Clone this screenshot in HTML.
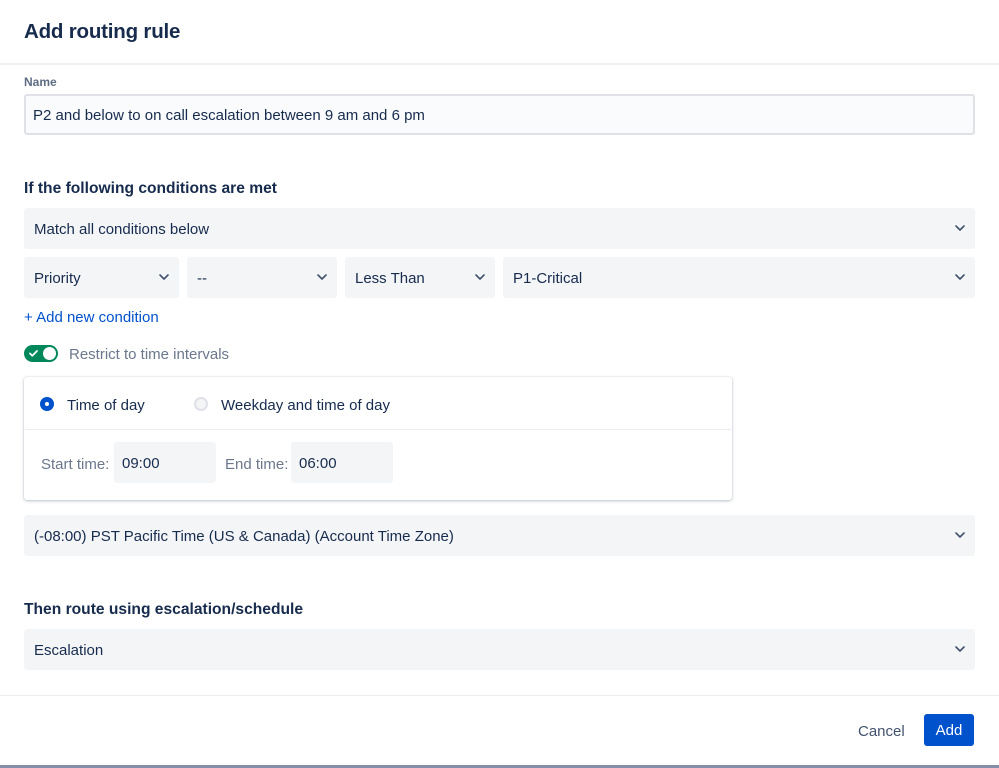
<!DOCTYPE html>
<html><head><meta charset="utf-8"><style>
*{box-sizing:border-box;margin:0;padding:0}
body{width:999px;height:768px;overflow:hidden;background:#fff;font-family:"Liberation Sans",sans-serif;color:#172b4d;position:relative}
.a{position:absolute}
.sel{position:absolute;background:#f4f5f7;border-radius:3px;height:41px;font-size:15px;line-height:43px;padding-left:10px;color:#172b4d}
.chev{position:absolute;right:9px;top:14px;width:12px;height:12px}
h3{position:absolute;font-size:15.6px;font-weight:bold;color:#172b4d}
</style></head><body>
<div class="a" style="left:24px;top:20px;font-size:20.5px;font-weight:bold;letter-spacing:-0.2px">Add routing rule</div>
<div class="a" style="left:0;top:63px;width:999px;height:2px;background:#f1f2f4"></div>
<div class="a" style="left:24px;top:75px;font-size:12px;font-weight:bold;color:#5e6c84">Name</div>
<div class="a" style="left:24px;top:94px;width:951px;height:41px;border:2px solid #dfe1e6;border-radius:3px;background:#fafbfc;font-size:15px;line-height:40px;padding-left:7px">P2 and below to on call escalation between 9 am and 6 pm</div>
<h3 style="left:24px;top:180px">If the following conditions are met</h3>
<svg width="0" height="0" style="position:absolute"><defs><symbol id="c" viewBox="0 0 12 12"><path d="M2 4l4 4 4-4" fill="none" stroke="#42526e" stroke-width="1.6" stroke-linecap="round" stroke-linejoin="round"/></symbol></defs></svg>
<div class="sel" style="left:24px;top:208px;width:951px">Match all conditions below<svg class="chev"><use href="#c"/></svg></div>
<div class="sel" style="left:24px;top:257px;width:155px">Priority<svg class="chev"><use href="#c"/></svg></div>
<div class="sel" style="left:187px;top:257px;width:150px">--<svg class="chev"><use href="#c"/></svg></div>
<div class="sel" style="left:345px;top:257px;width:150px">Less Than<svg class="chev"><use href="#c"/></svg></div>
<div class="sel" style="left:503px;top:257px;width:472px">P1-Critical<svg class="chev"><use href="#c"/></svg></div>
<div class="a" style="left:24px;top:309px;font-size:15px;color:#0052cc">+ Add new condition</div>
<div class="a" style="left:24px;top:345px;width:34px;height:17px;border-radius:9px;background:#00875a"></div>
<div class="a" style="left:43px;top:347px;width:13px;height:13px;border-radius:50%;background:#fff"></div>
<svg class="a" style="left:28px;top:348px" width="11" height="11" viewBox="0 0 11 11"><path d="M2 5.5l2.3 2.3L9 3" fill="none" stroke="#fff" stroke-width="1.8" stroke-linecap="round" stroke-linejoin="round"/></svg>
<div class="a" style="left:69px;top:346px;font-size:15px;color:#6b778c">Restrict to time intervals</div>
<div class="a" style="left:24px;top:377px;width:708px;height:123px;border-radius:3px;box-shadow:0 1px 3px rgba(9,30,66,.25),0 0 1px rgba(9,30,66,.2);background:#fff"></div>
<div class="a" style="left:40px;top:397px;width:14px;height:14px;border-radius:50%;background:#0052cc"></div>
<div class="a" style="left:45px;top:402px;width:4px;height:4px;border-radius:50%;background:#fff"></div>
<div class="a" style="left:67px;top:397px;font-size:15px">Time of day</div>
<div class="a" style="left:194px;top:397px;width:14px;height:14px;border-radius:50%;background:#f4f5f7;border:2px solid #dfe1e6"></div>
<div class="a" style="left:221px;top:397px;font-size:15px">Weekday and time of day</div>
<div class="a" style="left:25px;top:429px;width:706px;height:1px;background:#ebecf0"></div>
<div class="a" style="left:41px;top:456px;font-size:15px;color:#6b778c">Start time:</div>
<div class="a" style="left:114px;top:442px;width:102px;height:41px;background:#f4f5f7;border-radius:3px;font-size:15px;line-height:43px;padding-left:8px">09:00</div>
<div class="a" style="left:225px;top:456px;font-size:15px;color:#6b778c">End time:</div>
<div class="a" style="left:291px;top:442px;width:102px;height:41px;background:#f4f5f7;border-radius:3px;font-size:15px;line-height:43px;padding-left:8px">06:00</div>
<div class="sel" style="left:24px;top:515px;width:951px">(-08:00) PST Pacific Time (US &amp; Canada) (Account Time Zone)<svg class="chev"><use href="#c"/></svg></div>
<h3 style="left:24px;top:601px">Then route using escalation/schedule</h3>
<div class="sel" style="left:24px;top:629px;width:951px">Escalation<svg class="chev"><use href="#c"/></svg></div>
<div class="a" style="left:0;top:695px;width:999px;height:1px;background:#ebecf0"></div>
<div class="a" style="left:858px;top:723px;font-size:15px;color:#42526e">Cancel</div>
<div class="a" style="left:924px;top:714px;width:50px;height:32px;background:#0052cc;border-radius:3px;color:#fff;font-size:15px;line-height:33px;text-align:center">Add</div>
<div class="a" style="left:0;top:765px;width:999px;height:3px;background:#8590a6"></div>
</body></html>
